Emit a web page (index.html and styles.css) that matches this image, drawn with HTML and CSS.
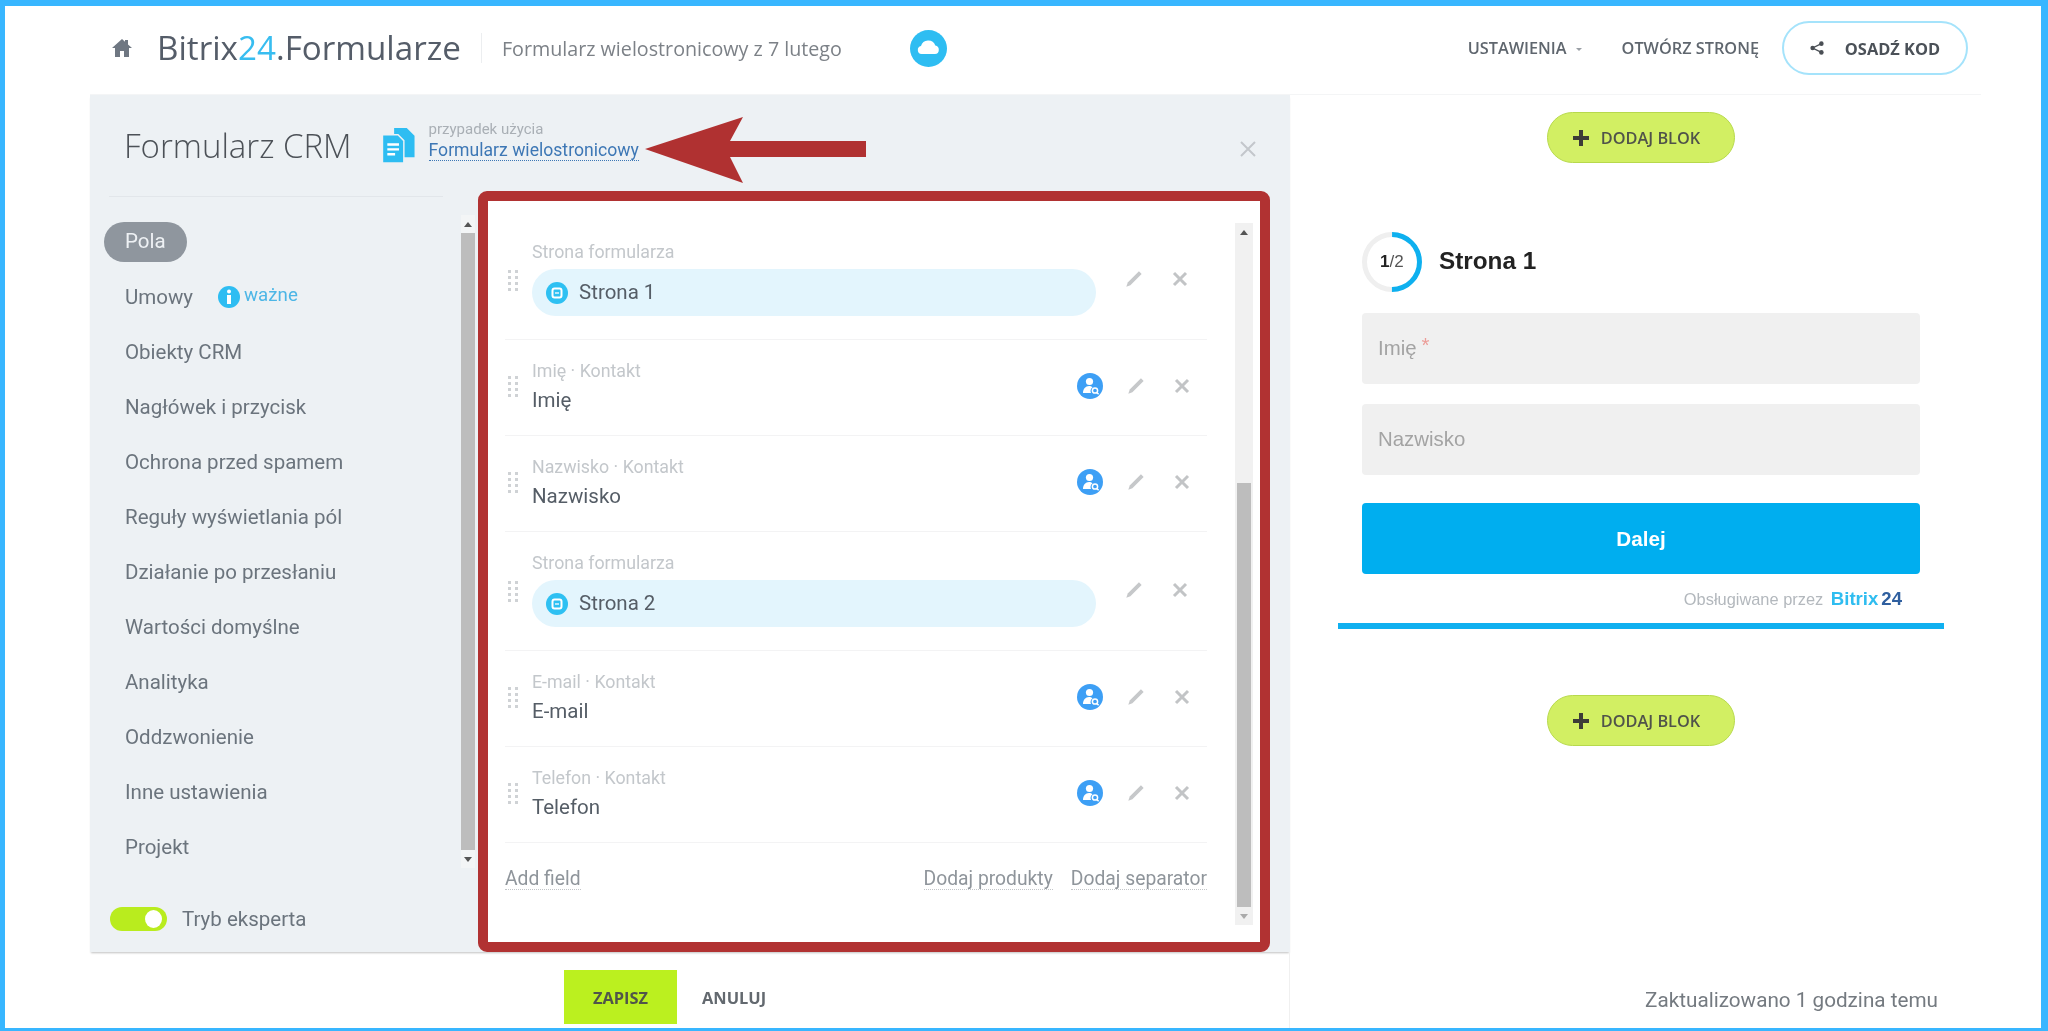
FILE: index.html
```html
<!DOCTYPE html>
<html lang="pl">
<head>
    <meta charset="UTF-8">
    <meta name="viewport" content="width=device-width, initial-scale=1.0">
    <title>Bitrix24.Formularze</title>
    <link rel="stylesheet" href="styles.css">
</head>
<body>
    <svg class="sprite" aria-hidden="true">
        <symbol id="pencil" viewBox="0 0 20 20">
            <path d="M15.5 1.5l3 3L6 17l-4.5 1.5L3 14z" fill="#c6c8ca"/>
        </symbol>
        <symbol id="cross" viewBox="0 0 18 18">
            <path d="M3 3l12 12M15 3L3 15" stroke="#c2c4c6" stroke-width="3" fill="none"/>
        </symbol>
        <symbol id="grip" viewBox="0 0 10 21">
            <g fill="#cfd2d5">
                <rect x="0" y="0" width="3" height="3"/><rect x="7" y="0" width="3" height="3"/>
                <rect x="0" y="6" width="3" height="3"/><rect x="7" y="6" width="3" height="3"/>
                <rect x="0" y="12" width="3" height="3"/><rect x="7" y="12" width="3" height="3"/>
                <rect x="0" y="18" width="3" height="3"/><rect x="7" y="18" width="3" height="3"/>
            </g>
        </symbol>
        <symbol id="contact" viewBox="0 0 26 26">
            <circle cx="13" cy="13" r="13" fill="#3d9ff5"/>
            <circle cx="12.5" cy="8.5" r="3.6" fill="#fff"/>
            <path d="M6 20c0-4 2.500-7 6-7 1.500 0 2.500.5 3.500 1.200-2 1.500-2.500 3.800-1.500 5.800z" fill="#fff"/>
            <circle cx="18" cy="17.500" r="2.600" fill="none" stroke="#fff" stroke-width="1.500"/>
            <path d="M19.800 19.500l1.800 1.800" stroke="#fff" stroke-width="1.500"/>
        </symbol>
        <symbol id="page" viewBox="0 0 22 22">
            <circle cx="11" cy="11" r="11" fill="#2ec0f2"/>
            <rect x="6.500" y="6.500" width="9" height="9" rx="2" fill="none" stroke="#fff" stroke-width="2"/>
            <path d="M9 11h4" stroke="#e3f5fd" stroke-width="1.500"/>
        </symbol>
        <symbol id="plus" viewBox="0 0 18 18">
            <path d="M9 1v16M1 9h16" stroke="#3c3c38" stroke-width="4" fill="none"/>
        </symbol>
    </svg>

    <div class="frame">
        <header class="topbar">
            <svg class="home-icon" viewBox="0 0 20 18"><path d="M10 0L0 9h3v9h5v-6h4v6h5V9h3l-4-3.600V1h-3v1.700z" fill="#6f7782"/></svg>
            <div class="brand">Bitrix<span class="brand-num">24</span>.Formularze</div>
            <div class="form-name">Formularz wielostronicowy z 7 lutego</div>
            <svg class="cloud-icon" viewBox="0 0 37 37">
                <circle cx="18.500" cy="18.500" r="18.500" fill="#2ebdf2"/>
                <path d="M11.500 24a4 4 0 0 1-.5-7.900 7.500 7.500 0 0 1 14.300-.6A4.300 4.300 0 0 1 25 24z" fill="#fff"/>
            </svg>
            <nav class="top-links">
                <a class="top-link">USTAWIENIA<span class="caret"></span></a>
                <a class="top-link">OTWÓRZ STRONĘ</a>
                <a class="embed-btn">
                    <svg class="share-icon" viewBox="0 0 16 16">
                        <circle cx="3" cy="8" r="2.600" fill="#4a4f55"/><circle cx="13" cy="3" r="2.600" fill="#4a4f55"/><circle cx="13" cy="13" r="2.600" fill="#4a4f55"/>
                        <path d="M13 3L3 8l10 5" stroke="#4a4f55" stroke-width="1.500" fill="none"/>
                    </svg>
                    OSADŹ KOD
                </a>
            </nav>
        </header>

        <div class="workspace">
            <div class="editor">
                <section class="panel">
                    <div class="panel-head">
                        <h1 class="panel-title">Formularz CRM</h1>
                        <svg class="case-icon" viewBox="0 0 33 36">
                            <path d="M12 0h13l8 8v22H12z" fill="#2ebdf2"/>
                            <path d="M0 7h16l6 6v23H0z" fill="#2ebdf2" stroke="#edf1f4" stroke-width="1.500"/>
                            <path d="M5 17h12M5 22h12M5 27h8" stroke="#fff" stroke-width="2.500"/>
                        </svg>
                        <div class="case-text">
                            <div class="case-label">przypadek użycia</div>
                            <a class="case-link">Formularz wielostronicowy</a>
                        </div>
                        <svg class="arrow" viewBox="0 0 221 66"><path d="M0 32L98 0 85 24H221V40H85L98 66z" fill="#b03131"/></svg>
                        <svg class="panel-close" viewBox="0 0 18 18"><path d="M2 2l14 14M16 2L2 16" stroke="#c3c7cb" stroke-width="2" fill="none"/></svg>
                    </div>

                    <div class="panel-body">
                        <aside class="sidebar">
                            <div class="sidebar-rule"></div>
                            <div class="sidebar-main">
                                <ul class="menu">
                                    <li class="menu-item"><span class="menu-pill">Pola</span></li>
                                    <li class="menu-item">Umowy
                                        <svg class="info-icon" viewBox="0 0 22 22">
                                            <circle cx="11" cy="11" r="11" fill="#2ebdf2"/>
                                            <circle cx="11" cy="5.500" r="2" fill="#fff"/>
                                            <rect x="9" y="9" width="4" height="9" fill="#fff"/>
                                        </svg>
                                        <span class="menu-note">ważne</span>
                                    </li>
                                    <li class="menu-item">Obiekty CRM</li>
                                    <li class="menu-item">Nagłówek i przycisk</li>
                                    <li class="menu-item">Ochrona przed spamem</li>
                                    <li class="menu-item">Reguły wyświetlania pól</li>
                                    <li class="menu-item">Działanie po przesłaniu</li>
                                    <li class="menu-item">Wartości domyślne</li>
                                    <li class="menu-item">Analityka</li>
                                    <li class="menu-item">Oddzwonienie</li>
                                    <li class="menu-item">Inne ustawienia</li>
                                    <li class="menu-item">Projekt</li>
                                </ul>
                                <div class="scrollbar scrollbar-side">
                                    <div class="scroll-btn"><span class="tri-up"></span></div>
                                    <div class="scroll-thumb thumb-full"></div>
                                    <div class="scroll-btn"><span class="tri-down"></span></div>
                                </div>
                            </div>
                            <div class="expert">
                                <span class="switch"><span class="switch-knob"></span></span>
                                Tryb eksperta
                            </div>
                        </aside>

                        <div class="fields-box">
                            <div class="fields">
                                <div class="row row-page">
                                    <svg class="grip"><use href="#grip"/></svg>
                                    <div class="row-main">
                                        <div class="row-label">Strona formularza</div>
                                        <div class="page-pill"><svg class="page-icon"><use href="#page"/></svg>Strona 1</div>
                                    </div>
                                    <div class="row-actions">
                                        <svg class="act-icon"><use href="#pencil"/></svg>
                                        <svg class="act-icon"><use href="#cross"/></svg>
                                    </div>
                                </div>
                                <div class="row row-field">
                                    <svg class="grip"><use href="#grip"/></svg>
                                    <div class="row-main">
                                        <div class="row-label">Imię · Kontakt</div>
                                        <div class="row-name">Imię</div>
                                    </div>
                                    <div class="row-actions">
                                        <svg class="contact-icon"><use href="#contact"/></svg>
                                        <svg class="act-icon"><use href="#pencil"/></svg>
                                        <svg class="act-icon"><use href="#cross"/></svg>
                                    </div>
                                </div>
                                <div class="row row-field">
                                    <svg class="grip"><use href="#grip"/></svg>
                                    <div class="row-main">
                                        <div class="row-label">Nazwisko · Kontakt</div>
                                        <div class="row-name">Nazwisko</div>
                                    </div>
                                    <div class="row-actions">
                                        <svg class="contact-icon"><use href="#contact"/></svg>
                                        <svg class="act-icon"><use href="#pencil"/></svg>
                                        <svg class="act-icon"><use href="#cross"/></svg>
                                    </div>
                                </div>
                                <div class="row row-page">
                                    <svg class="grip"><use href="#grip"/></svg>
                                    <div class="row-main">
                                        <div class="row-label">Strona formularza</div>
                                        <div class="page-pill"><svg class="page-icon"><use href="#page"/></svg>Strona 2</div>
                                    </div>
                                    <div class="row-actions">
                                        <svg class="act-icon"><use href="#pencil"/></svg>
                                        <svg class="act-icon"><use href="#cross"/></svg>
                                    </div>
                                </div>
                                <div class="row row-field">
                                    <svg class="grip"><use href="#grip"/></svg>
                                    <div class="row-main">
                                        <div class="row-label">E-mail · Kontakt</div>
                                        <div class="row-name">E-mail</div>
                                    </div>
                                    <div class="row-actions">
                                        <svg class="contact-icon"><use href="#contact"/></svg>
                                        <svg class="act-icon"><use href="#pencil"/></svg>
                                        <svg class="act-icon"><use href="#cross"/></svg>
                                    </div>
                                </div>
                                <div class="row row-field">
                                    <svg class="grip"><use href="#grip"/></svg>
                                    <div class="row-main">
                                        <div class="row-label">Telefon · Kontakt</div>
                                        <div class="row-name">Telefon</div>
                                    </div>
                                    <div class="row-actions">
                                        <svg class="contact-icon"><use href="#contact"/></svg>
                                        <svg class="act-icon"><use href="#pencil"/></svg>
                                        <svg class="act-icon"><use href="#cross"/></svg>
                                    </div>
                                </div>
                                <div class="field-links">
                                    <a class="field-link">Add field</a>
                                    <a class="field-link link-push">Dodaj produkty</a>
                                    <a class="field-link">Dodaj separator</a>
                                </div>
                            </div>
                            <div class="scrollbar scrollbar-fields">
                                <div class="scroll-btn"><span class="tri-up"></span></div>
                                <div class="scroll-gap"></div>
                                <div class="scroll-thumb thumb-lower"></div>
                                <div class="scroll-btn"><span class="tri-down tri-light"></span></div>
                            </div>
                        </div>
                    </div>
                </section>

                <footer class="save-bar">
                    <a class="save-btn">ZAPISZ</a>
                    <a class="cancel-btn">ANULUJ</a>
                </footer>
            </div>

            <main class="preview">
                <a class="add-block"><svg class="plus-icon"><use href="#plus"/></svg>DODAJ BLOK</a>

                <div class="form-card">
                    <div class="form-head">
                        <div class="ring"><span class="ring-text"><b>1</b>/2</span></div>
                        <div class="form-step">Strona 1</div>
                    </div>
                    <div class="input">Imię <span class="req">*</span></div>
                    <div class="input input-next">Nazwisko</div>
                    <div class="next-btn">Dalej</div>
                    <div class="powered">Obsługiwane przez <span class="powered-logo">Bitrix<span class="powered-num">24</span></span></div>
                </div>
                <div class="form-rule"></div>

                <a class="add-block add-bottom"><svg class="plus-icon"><use href="#plus"/></svg>DODAJ BLOK</a>

                <div class="updated">Zaktualizowano 1 godzina temu</div>
            </main>
        </div>
    </div>
</body>
</html>
```
FILE: styles.css
```css
* {
    box-sizing: border-box;
}

html, body {
    margin: 0;
    background-color: #fff;
}

a {
    cursor: pointer;
}

.sprite {
    display: none;
}

.frame {
    width: 2048px;
    height: 1031px;
    overflow: hidden;
    border-style: solid;
    border-color: #38b6ff;
    border-width: 6px 7px 3px 5px;
    padding-left: 85px;
    font-family: Roboto, sans-serif;
}

/* the reference is an upscaled capture, everything inside the frame is soft */
.topbar, .workspace {
    filter: blur(0.5px);
}

/* top bar */
.topbar {
    display: flex;
    align-items: center;
    width: 1891px;
    height: 89px;
    padding-left: 22px;
    padding-bottom: 4px;
    border-bottom: 1px solid #f4f5f6;
    font-family: "Open Sans", sans-serif;
}

.home-icon {
    width: 20px;
    height: 18px;
    margin-right: 25px;
}

.brand {
    font-size: 33.2px;
    font-weight: 500;
    color: #555d69;
    padding-right: 20px;
    line-height: 30px;
    border-right: 1px solid #eceef0;
}

.brand-num {
    color: #38bdf0;
}

.form-name {
    font-size: 19.7px;
    color: #7c8187;
    margin-left: 20px;
}

.cloud-icon {
    width: 37px;
    height: 37px;
    margin-left: 68px;
}

.top-links {
    display: flex;
    align-items: center;
    margin-left: auto;
    margin-right: 13px;
}

.top-link {
    font-size: 16.3px;
    font-weight: 600;
    color: #5f666e;
    margin-right: 23px;
}

.caret {
    display: inline-block;
    margin-left: 9px;
    margin-right: 17px;
    vertical-align: middle;
    border-left: 3px solid transparent;
    border-right: 3px solid transparent;
    border-top: 3px solid #9a9fa5;
}

.embed-btn {
    display: flex;
    align-items: center;
    justify-content: center;
    width: 186px;
    height: 54px;
    border: 2px solid #a5e3fb;
    border-radius: 27px;
    font-size: 16.4px;
    font-weight: 700;
    color: #4b5158;
}

.share-icon {
    width: 14px;
    height: 14px;
    margin-right: 21px;
}

/* left part */
.workspace {
    display: flex;
    height: 933px;
}

.editor {
    width: 1200px;
    flex-shrink: 0;
}

.panel {
    height: 857px;
    background-color: #edf1f4;
    box-shadow: 0 2px 2px -1px rgba(0, 0, 0, 0.25);
}

.panel-head {
    display: flex;
    align-items: center;
    height: 96px;
    padding-left: 34px;
}

.panel-title {
    margin: 5px 0 0;
    font-family: "Open Sans", sans-serif;
    font-size: 33px;
    font-weight: 300;
    color: #4c5157;
}

.case-icon {
    width: 33px;
    height: 35px;
    margin: 4px 14px 0 30px;
}

.case-text {
    margin-top: -4px;
}

.case-label {
    font-size: 15px;
    color: #a9afb5;
    line-height: 16px;
}

.case-link {
    display: block;
    margin-top: 4px;
    font-size: 17.6px;
    line-height: 19px;
    color: #3d77b5;
    border-bottom: 1px dotted #3d77b5;
}

.arrow {
    width: 221px;
    height: 66px;
    margin: 14px 0 0 6px;
}

.panel-close {
    width: 18px;
    height: 18px;
    margin: 12px 0 0 373px;
}

.panel-body {
    display: flex;
}

.sidebar {
    width: 388px;
    flex-shrink: 0;
    padding-top: 5px;
}

.sidebar-rule {
    height: 1px;
    margin: 0 35px 0 19px;
    background-color: #e2e6ea;
}

.sidebar-main {
    display: flex;
    margin-top: 18px;
}

.menu {
    width: 371px;
    margin: -1px 0 0;
    padding: 0 0 0 14px;
    list-style: none;
}

.menu-item {
    display: flex;
    align-items: center;
    height: 55px;
    padding-left: 21px;
    font-size: 20.5px;
    color: #6b747d;
}

.menu-pill {
    display: block;
    margin-left: -21px;
    padding: 0 21px;
    height: 40px;
    line-height: 39px;
    border-radius: 20px;
    background-color: #8f969e;
    color: #eef1f4;
}

.info-icon {
    width: 22px;
    height: 22px;
    margin-left: 25px;
}

.menu-note {
    margin: -3px 0 0 4px;
    font-size: 18.7px;
    color: #4db6e6;
}

.scrollbar {
    display: flex;
    flex-direction: column;
    flex-shrink: 0;
}

.scroll-btn {
    display: flex;
    align-items: center;
    justify-content: center;
    height: 18px;
}

.tri-up {
    border-left: 4px solid transparent;
    border-right: 4px solid transparent;
    border-bottom: 5px solid #555;
}

.tri-down {
    border-left: 4px solid transparent;
    border-right: 4px solid transparent;
    border-top: 5px solid #555;
}

.tri-light {
    border-top-color: #aaa;
}

.scroll-thumb {
    background-color: #bdbdbd;
}

.scrollbar-side {
    width: 14px;
    height: 653px;
    background-color: #f3f5f6;
}

.thumb-full {
    height: 617px;
}

.expert {
    display: flex;
    align-items: center;
    margin: 33px 0 0 20px;
    font-size: 20.5px;
    color: #6b747d;
}

.switch {
    display: block;
    width: 57px;
    height: 24px;
    margin-right: 15px;
    padding: 3px 5px 3px 35px;
    border-radius: 12px;
    background-color: #b9ec1e;
}

.switch-knob {
    display: block;
    width: 17px;
    height: 18px;
    border-radius: 50%;
    background-color: #fff;
}

/* red box with fields */
.fields-box {
    display: flex;
    width: 792px;
    height: 761px;
    border: 10px solid #b13232;
    border-radius: 9px;
    background-color: #fff;
}

.fields {
    width: 719px;
    padding: 20px 0 0 17px;
}

.row {
    display: flex;
    align-items: flex-start;
    border-bottom: 1px solid #f3f3f4;
}

.row-page {
    height: 119px;
}

.row-field {
    height: 96px;
}

.grip {
    width: 10px;
    height: 21px;
    flex-shrink: 0;
    margin-left: 3px;
    margin-right: 14px;
}

.row-page .grip {
    margin-top: 49px;
}

.row-field .grip {
    margin-top: 36px;
}

.row-main {
    flex: 1;
    padding-top: 21px;
}

.row-label {
    font-size: 17.8px;
    line-height: 20px;
    color: #c3c7cb;
}

.row-name {
    margin-top: 7px;
    font-size: 20.5px;
    line-height: 24px;
    color: #555d66;
}

.page-pill {
    display: flex;
    align-items: center;
    width: 564px;
    height: 47px;
    margin-top: 7px;
    padding-left: 14px;
    padding-bottom: 2px;
    border-radius: 24px;
    background-color: #e3f5fd;
    font-size: 20.5px;
    color: #555d66;
}

.page-icon {
    width: 22px;
    height: 22px;
    margin-top: 2px;
    margin-right: 11px;
}

.row-actions {
    display: flex;
    align-items: center;
    flex-shrink: 0;
}

.row-page .row-actions {
    margin: 49px 18px 0 0;
}

.row-field .row-actions {
    margin: 33px 16px 0 0;
}

.contact-icon {
    width: 26px;
    height: 26px;
    margin-right: 24px;
}

.act-icon {
    width: 18px;
    height: 18px;
}

.act-icon + .act-icon {
    margin-left: 28px;
}

.field-links {
    display: flex;
    margin-top: 25px;
}

.field-link {
    font-size: 19.3px;
    line-height: 21px;
    color: #8f959b;
    border-bottom: 1px dotted #c2c5c8;
}

.link-push {
    margin-left: auto;
    margin-right: 18px;
}

.scrollbar-fields {
    width: 18px;
    height: 702px;
    margin: 22px 0 0 28px;
    background-color: #f1f1f1;
    align-items: center;
}

.scroll-gap {
    height: 242px;
}

.thumb-lower {
    width: 14px;
    height: 424px;
}

/* save bar */
.save-bar {
    display: flex;
    align-items: center;
    height: 76px;
    padding: 18px 0 4px 474px;
    border-right: 1px solid #f0f0f0;
    font-family: "Open Sans", sans-serif;
    font-size: 16.4px;
    font-weight: 700;
}

.save-btn {
    display: flex;
    align-items: center;
    justify-content: center;
    width: 113px;
    height: 54px;
    background-color: #bbf01f;
    color: #50554a;
}

.cancel-btn {
    margin-left: 25px;
    color: #63696f;
}

/* form preview */
.preview {
    display: flex;
    flex-direction: column;
    align-items: center;
    width: 702px;
    padding-top: 17px;
    padding-bottom: 16px;
}

.add-block {
    display: flex;
    align-items: center;
    justify-content: center;
    width: 188px;
    height: 51px;
    padding-right: 10px;
    border: 1px solid #b7d94c;
    border-radius: 26px;
    background-color: #d2ef63;
    font-family: "Open Sans", sans-serif;
    font-size: 16.3px;
    font-weight: 600;
    color: #50534a;
}

.plus-icon {
    width: 18px;
    height: 18px;
    margin-right: 11px;
}

.form-card {
    width: 558px;
    margin-top: 69px;
    font-family: "Liberation Sans", Arial, sans-serif;
}

.form-head {
    display: flex;
    align-items: center;
    margin-bottom: 21px;
}

.ring {
    display: flex;
    align-items: center;
    justify-content: center;
    width: 60px;
    height: 60px;
    margin-right: 17px;
    border: 5px solid #efefef;
    border-right-color: #0eb0ef;
    border-top-color: #0eb0ef;
    border-radius: 50%;
    transform: rotate(45deg);
}

.ring-text {
    transform: rotate(-45deg);
    font-size: 17px;
    color: #555;
}

.ring-text b {
    color: #222;
}

.form-step {
    margin-top: -2px;
    font-size: 24.3px;
    font-weight: 700;
    color: #222;
}

.input {
    display: flex;
    align-items: center;
    height: 71px;
    padding-left: 16px;
    border-radius: 4px;
    background-color: #f0f0f0;
    font-size: 20.4px;
    color: #a3a3a3;
}

.input-next {
    margin-top: 20px;
}

.req {
    margin: -6px 0 0 5px;
    color: #ec9d98;
}

.next-btn {
    height: 71px;
    margin-top: 28px;
    border-radius: 4px;
    background-color: #00aeef;
    text-align: center;
    line-height: 71px;
    font-size: 20.7px;
    font-weight: 700;
    color: #fff;
}

.powered {
    margin-top: 13px;
    padding-right: 18px;
    text-align: right;
    font-size: 16.4px;
    line-height: 24px;
    color: #b3b8bd;
}

.powered-logo {
    margin-left: 3px;
    font-size: 18.6px;
    font-weight: 700;
    color: #2fbdf0;
}

.powered-num {
    margin-left: 3px;
    color: #2f5f9f;
}

.form-rule {
    width: 606px;
    height: 6px;
    margin-top: 12px;
    background-color: #10b0f0;
}

.add-bottom {
    margin-top: 66px;
}

.updated {
    margin-top: auto;
    align-self: flex-end;
    padding-right: 54px;
    font-size: 20.7px;
    line-height: 24px;
    color: #747a80;
}
```
